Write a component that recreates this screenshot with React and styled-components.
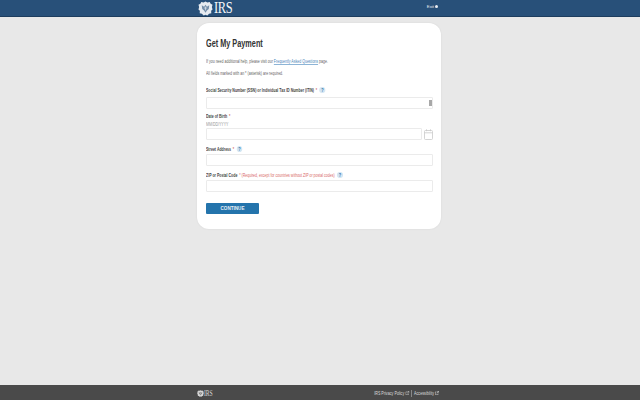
import styled, { createGlobalStyle } from "styled-components"

const Global = createGlobalStyle`
    html, body { margin: 0; padding: 0; }
    body { font-family: "Liberation Sans", Arial, sans-serif; background: #e8e8e8; }
`

function Help() {
    return <HelpIcon>?</HelpIcon>
}

// rough take on the treasury eagle seal, only ever seen very small
function Seal({ size, color, ink }) {
    return <svg width={size} height={size} viewBox="0 0 16 16">
        <path d="M8 .5 L10 1.5 L12.5 1 L13.5 3 L15.5 4 L14.8 6.5 L15.5 9 L14 10.5 L14.2 13 L11.8 13.5 L10 15.5 L8 14.6 L6 15.5 L4.2 13.5 L1.8 13 L2 10.5 L.5 9 L1.2 6.5 L.5 4 L2.5 3 L3.5 1 L6 1.5 Z" fill={color} />
        <path d="M4 4.5 L6.5 6 L8 4 L9.5 6 L12 4.5 L11.5 8.5 L9.5 10 L8 12.5 L6.5 10 L4.5 8.5 Z" fill={ink} opacity="0.6" />
        <path d="M2.5 11.5 L5 13 M13.5 11.5 L11 13 M8 6 V10 M6.5 7.5 H9.5" stroke={color} strokeWidth="0.7" />
    </svg>
}

function External() {
    return <svg width="5" height="4" viewBox="0 0 8 6.4" preserveAspectRatio="none" fill="none" stroke="#d8d8d8" strokeWidth="1">
        <path d="M6 4 V6 H0.5 V1.5 H3 M4 0.5 H7.5 V3 M7.5 0.5 L3.5 3.5" />
    </svg>
}

export default function App() {
    return <Page>
        <Global />
        <Header>
            <HeaderInner>
                <Logo>
                    <Seal size={15} color="#e6ebf1" ink="#285079" />
                    <LogoText>IRS</LogoText>
                </Logo>
                <Exit>Exit<ExitDot /></Exit>
            </HeaderInner>
        </Header>
        <Main>
            <Card>
                <Title>Get My Payment</Title>
                <Para>If you need additional help, please visit our <a href="#faq">Frequently Asked Questions</a> page.</Para>
                <Para>All fields marked with an * (asterisk) are required.</Para>
                <Field $top={10.5}>
                    <Label $gap={4}>Social Security Number (SSN) or Individual Tax ID Number (ITIN) <Star>*</Star><Help /></Label>
                    <InputWrap>
                        <Input />
                        <MaskIcon />
                    </InputWrap>
                </Field>
                <Field $top={4}>
                    <Label $gap={3}>Date of Birth <Star>*</Star></Label>
                    <Hint>MM/DD/YYYY</Hint>
                    <DateRow>
                        <Input />
                        <svg width="9" height="11" viewBox="0 0 9 11" fill="none" stroke="#c9c9c9" strokeWidth="0.8">
                            <rect x="0.5" y="1.5" width="8" height="9" rx="1" />
                            <path d="M0.5 3.8 H8.5 M2.5 0.3 V2.2 M6.5 0.3 V2.2" />
                        </svg>
                    </DateRow>
                </Field>
                <Field>
                    <Label>Street Address <Star>*</Star><Help /></Label>
                    <Input />
                </Field>
                <Field>
                    <Label>ZIP or Postal Code <Required>* (Required, except for countries without ZIP or postal codes)</Required><Help /></Label>
                    <Input />
                </Field>
                <Continue>CONTINUE</Continue>
            </Card>
        </Main>
        <Footer>
            <FooterInner>
                <FooterLogo>
                    <Seal size={7} color="#d8d8d8" ink="#4a4a4a" />
                    <FooterLogoText>IRS</FooterLogoText>
                </FooterLogo>
                <FooterLinks>
                    <FooterLink>IRS Privacy Policy <External /></FooterLink>
                    <FooterLink $divider>Accessibility <External /></FooterLink>
                </FooterLinks>
            </FooterInner>
        </Footer>
    </Page>
}

const Page = styled.div`
    display: flex;
    flex-direction: column;
    min-height: 400px;
    height: 100vh;
`

const Header = styled.header`
    height: 16px;
    background-color: #285079;
    border-bottom: 1px solid #1d3d5e;
    flex-shrink: 0;
`

const HeaderInner = styled.div`
    width: 244px;
    height: 100%;
    margin-left: 197px;
    display: flex;
    align-items: center;
    justify-content: space-between;
`

const Logo = styled.div`
    display: flex;
    align-items: center;
    gap: 1px;
    margin-left: 1px;
`

const LogoText = styled.span`
    font-family: "Liberation Serif", serif;
    color: #f4f6f8;
    font-size: 16px;
    line-height: 16px;
    letter-spacing: -0.4px;
    transform: scaleX(0.78);
    transform-origin: left center;
`

const Exit = styled.div`
    display: flex;
    align-items: center;
    gap: 1px;
    color: #e8edf2;
    font-size: 4.3px;
    margin-right: 3px;
    margin-top: -3px;
`

const ExitDot = styled.span`
    width: 3px;
    height: 3px;
    border-radius: 50%;
    background: #e8edf2;
`

const Main = styled.main`
    flex: 1;
    padding: 6px 0 0 197px;
`

const Card = styled.section`
    width: 244px;
    height: 206px;
    box-sizing: border-box;
    background: #fff;
    border-radius: 12px;
    padding: 15px 8px 0 9px;
    box-shadow: 0 0 2px rgba(0, 0, 0, 0.08);
`

const Title = styled.h1`
    margin: 0 0 9px;
    font-size: 10px;
    line-height: 12px;
    font-weight: 700;
    color: #333;
    white-space: nowrap;
    transform: scaleX(0.73);
    transform-origin: left center;
`

const Para = styled.p`
    margin: 0 0 5.5px;
    width: 130%;
    font-size: 4.6px;
    line-height: 6px;
    color: #666;
    transform: scaleX(0.77);
    transform-origin: left center;
    a {
        color: #4a85b8;
        text-decoration-color: #8db4d6;
    }
`

const Field = styled.div`
    margin-top: ${(p) => p.$top || 6}px;
`

const Label = styled.div`
    display: flex;
    align-items: center;
    gap: 1px;
    width: 130%;
    height: 6px;
    margin-bottom: ${(p) => (p.$gap === undefined ? 2 : p.$gap)}px;
    font-size: 4.6px;
    font-weight: 700;
    color: #444;
    white-space: pre-wrap;
    transform: scaleX(0.77);
    transform-origin: left center;
`

const Star = styled.span`
    font-weight: 400;
    color: #b33;
`

const Required = styled.span`
    font-weight: 400;
    color: #d86a6a;
`

const HelpIcon = styled.span`
    width: 7.5px;
    height: 6px;
    margin-left: 2px;
    border-radius: 50%;
    background: #d5e6f3;
    color: #2a6fa8;
    font-size: 5px;
    font-weight: 700;
    line-height: 6px;
    text-align: center;
`

const Hint = styled.div`
    font-size: 4.6px;
    line-height: 6px;
    color: #999;
    transform: scaleX(0.77);
    transform-origin: left center;
`

const InputWrap = styled.div`
    position: relative;
`

const Input = styled.div`
    flex: 1;
    height: 10px;
    border: 1px solid #ebebeb;
    border-radius: 1px;
    background: #fff;
`

const MaskIcon = styled.span`
    position: absolute;
    right: 1px;
    top: 3px;
    width: 3px;
    height: 6px;
    background: #a8a8a8;
`

const DateRow = styled.div`
    display: flex;
    align-items: center;
    gap: 2px;
`

const Continue = styled.button`
    display: block;
    width: 53px;
    height: 11px;
    margin-top: 11px;
    padding: 0;
    border: 0;
    border-radius: 1px;
    background: #2474ac;
    color: #e8f0f6;
    font-family: inherit;
    font-size: 4.6px;
    font-weight: 700;
`

const Footer = styled.footer`
    height: 15px;
    background: #4a4a4a;
    flex-shrink: 0;
`

const FooterInner = styled.div`
    width: 242px;
    height: 100%;
    margin-left: 197px;
    display: flex;
    align-items: center;
    justify-content: space-between;
`

const FooterLogo = styled.div`
    display: flex;
    align-items: center;
    margin-top: 2px;
`

const FooterLogoText = styled.span`
    font-family: "Liberation Serif", serif;
    color: #d8d8d8;
    font-size: 8px;
    line-height: 8px;
    transform: scaleX(0.7);
    transform-origin: left center;
`

const FooterLinks = styled.div`
    display: flex;
    align-items: center;
    margin-top: 1px;
    transform: scaleX(0.8);
    transform-origin: right center;
`

const FooterLink = styled.span`
    color: #dcdcdc;
    font-size: 4.6px;
    line-height: 7px;
    padding-left: ${(p) => (p.$divider ? 3 : 0)}px;
    margin-left: ${(p) => (p.$divider ? 2 : 0)}px;
    border-left: ${(p) => (p.$divider ? "1px solid #999" : "0")};
`
